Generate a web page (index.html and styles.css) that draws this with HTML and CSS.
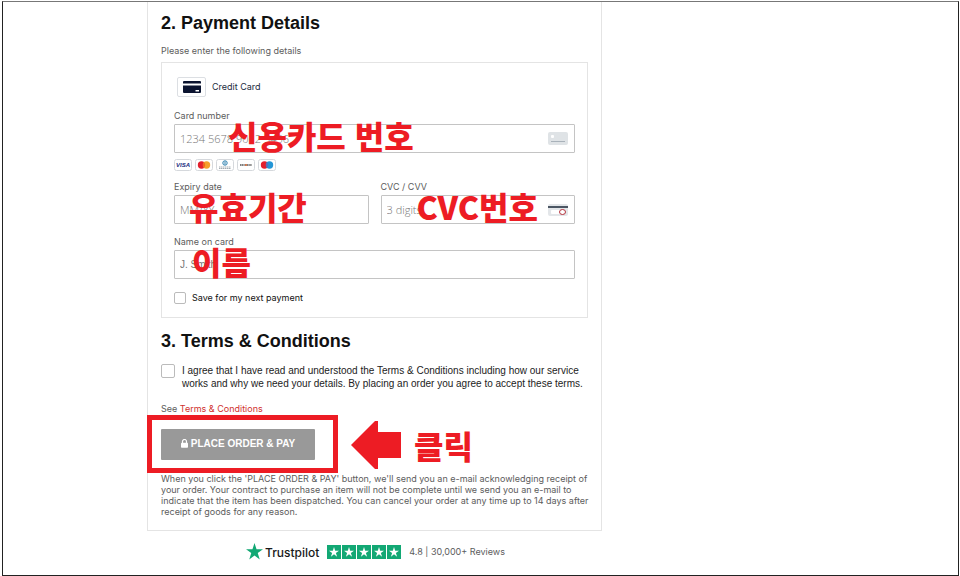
FILE: index.html
```
<!DOCTYPE html>
<html lang="en">
<head>
    <meta charset="UTF-8">
    <meta name="viewport" content="width=device-width, initial-scale=1.0">
    <title>Payment Details</title>
    <link rel="stylesheet" href="styles.css">
</head>
<body>
    <svg class="defs" aria-hidden="true">
        <symbol id="star" viewBox="0 0 20 20">
            <path d="M10 0l2.4 7.3H20l-6.2 4.6 2.4 7.4L10 14.700l-6.200 4.600 2.400-7.400L0 7.300h7.600z"/>
        </symbol>
    </svg>

    <main class="frame">
        <form class="checkout">
            <section>
                <h2>2. Payment Details</h2>
                <p class="intro">Please enter the following details</p>

                <div class="panel">
                    <div class="method">
                        <span class="method-icon">
                            <svg width="18" height="12" viewBox="0 0 18 12">
                                <path fill="#0b1430" d="M1 0h16q1 0 1 1v1.500H0V1q0-1 1-1zM0 4.500h18V11q0 1-1 1H1q-1 0-1-1z"/>
                                <path fill="#fff" d="M12.500 9h3.500v1.500h-3.500z"/>
                            </svg>
                        </span>
                        <span>Credit Card</span>
                    </div>

                    <div class="field">
                        <label for="cardNumber">Card number</label>
                        <div class="control">
                            <input type="text" id="cardNumber" placeholder="1234 5678 9012 3456">
                            <svg class="field-icon" width="20" height="14" viewBox="0 0 20 14">
                                <rect width="20" height="13" rx="2" fill="#dfe3e6"/>
                                <rect x="3" y="3" width="3" height="3" rx="1" fill="#fff"/>
                                <path d="M3 9.500h14" stroke="#a9b2ba"/>
                            </svg>
                            <span class="note note-number" lang="ko">신용카드 번호</span>
                        </div>
                        <div class="brands">
                            <svg width="18" height="12" viewBox="0 0 18 12">
                                <rect x=".5" y=".5" width="17" height="11" rx="2" fill="#fff" stroke="#d5d8dc"/>
                                <text x="9" y="8" class="visa">VISA</text>
                            </svg>
                            <svg width="18" height="12" viewBox="0 0 18 12">
                                <rect x=".5" y=".5" width="17" height="11" rx="2" fill="#fff" stroke="#d5d8dc"/>
                                <circle cx="6.500" cy="6" r="3.700" fill="#e3202c"/>
                                <circle cx="11.500" cy="6" r="3.700" fill="#f5a02a"/>
                                <path d="M9 3.300a3.700 3.700 0 0 1 0 5.400a3.700 3.700 0 0 1 0-5.400z" fill="#f26522"/>
                            </svg>
                            <svg width="18" height="12" viewBox="0 0 18 12">
                                <rect x=".5" y=".5" width="17" height="11" rx="2" fill="#fff" stroke="#d5d8dc"/>
                                <circle cx="9" cy="4" r="2.200" fill="#fff" stroke="#2b7fae"/>
                                <path d="M9 2.500v3" stroke="#2b7fae"/>
                                <path d="M3 8h12M3 9.500h12" stroke="#8d979e" stroke-width=".8" stroke-dasharray="1.500 .5"/>
                            </svg>
                            <svg width="18" height="12" viewBox="0 0 18 12">
                                <rect x=".5" y=".5" width="17" height="11" rx="2" fill="#fff" stroke="#d5d8dc"/>
                                <path d="M3 6h12" stroke="#555" stroke-width="1.500" stroke-dasharray="1.300 .4"/>
                                <circle cx="9" cy="6" r="1" fill="#e0703a"/>
                            </svg>
                            <svg width="18" height="12" viewBox="0 0 18 12">
                                <rect x=".5" y=".5" width="17" height="11" rx="2" fill="#fff" stroke="#d5d8dc"/>
                                <circle cx="6.500" cy="6" r="3.700" fill="#e3202c"/>
                                <circle cx="11.500" cy="6" r="3.700" fill="#2496d6"/>
                                <path d="M9 3.300a3.700 3.700 0 0 1 0 5.400a3.700 3.700 0 0 1 0-5.400z" fill="#5f6db5"/>
                            </svg>
                        </div>
                    </div>

                    <div class="field-row">
                        <div class="field">
                            <label for="expiry">Expiry date</label>
                            <div class="control">
                                <input type="text" id="expiry" placeholder="MM/YY">
                                <span class="note note-expiry" lang="ko">유효기간</span>
                            </div>
                        </div>
                        <div class="field">
                            <label for="cvc">CVC / CVV</label>
                            <div class="control">
                                <input type="text" id="cvc" placeholder="3 digits">
                                <svg class="field-icon" width="20" height="14" viewBox="0 0 20 14">
                                    <rect y="1" width="20" height="12" rx="2" fill="#e3e6e9"/>
                                    <path d="M0 4h20" stroke="#4b5663" stroke-width="2"/>
                                    <rect x="3" y="7" width="10" height="4" rx="1" fill="#fff"/>
                                    <ellipse cx="14.500" cy="9" rx="3" ry="2.500" fill="#fff" stroke="#b5303a"/>
                                </svg>
                                <span class="note note-cvc" lang="ko">CVC번호</span>
                            </div>
                        </div>
                    </div>

                    <div class="field">
                        <label for="cardName">Name on card</label>
                        <div class="control">
                            <input type="text" id="cardName" class="plain" placeholder="J. Smith">
                            <span class="note note-name" lang="ko">이름</span>
                        </div>
                    </div>

                    <div class="save">
                        <input type="checkbox" id="save">
                        <label for="save">Save for my next payment</label>
                    </div>
                </div>
            </section>

            <section>
                <h2>3. Terms &amp; Conditions</h2>
                <div class="agree">
                    <input type="checkbox" id="agree">
                    <label for="agree">I agree that I have read and understood the Terms &amp; Conditions including how our service<br>works and why we need your details. By placing an order you agree to accept these terms.</label>
                </div>
                <p class="see">See <a href="#terms">Terms &amp; Conditions</a></p>

                <div class="submit">
                    <button type="submit">
                        <svg width="7" height="9" viewBox="0 0 7 9">
                            <path d="M1.500 4V2.500a2 2 0 0 1 4 0V4" fill="none" stroke="#fff" stroke-width="1.200"/>
                            <rect y="3.700" width="7" height="5" rx=".8" fill="#fff"/>
                        </svg>
                        PLACE ORDER &amp; PAY
                    </button>
                    <div class="highlight"></div>
                    <div class="pointer">
                        <svg width="50" height="48" viewBox="0 0 50 48">
                            <path fill="#ed1c24" d="M0 24L24 0h3v11h23v26H27v11h-3z"/>
                        </svg>
                        <span class="note-text" lang="ko">클릭</span>
                    </div>
                </div>

                <p class="small-print">When you click the 'PLACE ORDER &amp; PAY' button, we'll send you an e-mail acknowledging receipt of<br>your order. Your contract to purchase an item will not be complete until we send you an e-mail to<br>indicate that the item has been dispatched. You can cancel your order at any time up to 14 days after<br>receipt of goods for any reason.</p>
            </section>
        </form>

        <footer class="trust">
            <svg class="logo-star" width="17" height="17"><use href="#star"/></svg>
            <span class="trust-name">Trustpilot</span>
            <span class="rating">
                <span><svg width="10" height="10"><use href="#star"/></svg></span>
                <span><svg width="10" height="10"><use href="#star"/></svg></span>
                <span><svg width="10" height="10"><use href="#star"/></svg></span>
                <span><svg width="10" height="10"><use href="#star"/></svg></span>
                <span><svg width="10" height="10"><use href="#star"/></svg></span>
            </span>
            <span>4.8 | 30,000+ Reviews</span>
        </footer>
    </main>
</body>
</html>
```
FILE: styles.css
```
:root {
    --red: #ed1c24;
    --green: #12a874;
    --line: #e4e4e4;
    --text: #5c5c5c;
}

* {
    box-sizing: border-box;
}

body {
    margin: 0;
    padding: 1px 1px 0 2px;
    background: white;
    color: var(--text);
    font: 9px/12px Inter, Arial, sans-serif;
}

.defs {
    position: absolute;
    width: 0;
    height: 0;
}

.frame {
    min-height: calc(100vh - 1px);
    padding-left: 144px;
    border: 1px solid #222;
    border-top-color: #777;
}

.checkout {
    max-width: 455px;
    padding: 10px 13px 13px;
    border: 1px solid var(--line);
    border-top: 0;
}

h2 {
    margin: 0;
    color: #111;
    font: bold 18px/22px "Liberation Sans", Arial, sans-serif;
}

p {
    margin: 0;
}

.intro {
    margin: 11px 0 5px;
}

.panel {
    margin-bottom: 12px;
    padding: 14px 12px 13px;
    border: 1px solid var(--line);
}

.method {
    display: flex;
    align-items: center;
    gap: 6px;
    margin: 0 3px 13px;
    color: #222b40;
}

.method-icon {
    display: flex;
    align-items: center;
    justify-content: center;
    width: 29px;
    height: 20px;
    border: 1px solid #dcdfe3;
    border-radius: 2px;
}

.field label {
    display: block;
    margin-bottom: 2px;
}

.control {
    position: relative;
}

input[type="text"] {
    display: block;
    width: 100%;
    height: 29px;
    padding: 0 5px;
    border: 1px solid #c4c4c4;
    border-radius: 1px;
    background: white;
    color: #333;
    font: 300 11px "Open Sans", sans-serif;
}

input[type="text"].plain {
    font: 10px "Liberation Sans", Arial, sans-serif;
}

input::placeholder {
    color: #777;
    opacity: 1;
}

.field-icon {
    position: absolute;
    top: 8px;
    right: 7px;
}

.brands {
    display: flex;
    gap: 3px;
    margin: 6px 0 10px;
}

.visa {
    fill: #1a2a80;
    font: italic bold 6px "Liberation Sans", Arial, sans-serif;
    text-anchor: middle;
}

.field-row {
    display: grid;
    grid-template-columns: 1fr 1fr;
    gap: 12px;
    margin-bottom: 12px;
}

/* red callouts over the fields */
.note,
.note-text {
    color: var(--red);
    font: 900 32px/32px "Noto Sans CJK KR", sans-serif;
    white-space: nowrap;
}

.note {
    position: absolute;
    top: -5px;
    pointer-events: none;
}

.note-number {
    left: 54px;
}

.note-expiry {
    left: 15px;
}

.note-cvc {
    left: 36px;
}

.note-name {
    left: 18px;
}

input[type="checkbox"] {
    appearance: none;
    flex: none;
    width: 12px;
    height: 12px;
    margin: 0;
    border: 1px solid #bbb;
    border-radius: 2px;
    background: white;
}

.save {
    display: flex;
    align-items: center;
    gap: 6px;
    margin-top: 13px;
    color: #111;
}

.agree {
    display: flex;
    gap: 7px;
    margin: 12px 0 13px;
    color: #222;
    font: 10px/13px "Liberation Sans", Arial, sans-serif;
    white-space: nowrap;
}

.agree input[type="checkbox"] {
    width: 14px;
    height: 14px;
}

.see a {
    color: #d0312d;
    text-decoration: none;
}

.submit {
    position: relative;
    display: flex;
    align-items: center;
    margin: 14px 0 13px;
}

button {
    display: flex;
    align-items: center;
    justify-content: center;
    gap: 3px;
    width: 154px;
    height: 31px;
    padding: 0 0 3px;
    border: 0;
    border-radius: 1px;
    background: #999;
    color: white;
    font: bold 10px "Liberation Sans", Arial, sans-serif;
}

.highlight {
    position: absolute;
    top: -14px;
    left: -14px;
    width: 191px;
    height: 58px;
    border: 5px solid var(--red);
    pointer-events: none;
}

.pointer {
    position: absolute;
    top: -8px;
    left: 190px;
    display: flex;
    align-items: center;
    gap: 13px;
}

.small-print {
    line-height: 11px;
    white-space: nowrap;
}

.trust {
    display: flex;
    align-items: center;
    max-width: 455px;
    padding: 12px 0 12px 99px;
}

.logo-star {
    fill: var(--green);
}

.logo-star use,
.rating use {
    width: 100%;
    height: 100%;
}

.trust-name {
    margin: 2px 8px 0 2px;
    color: #191919;
    font: 500 12px/15px Inter, sans-serif;
}

.rating {
    display: flex;
    gap: 1px;
    margin-right: 8px;
}

.rating span {
    display: flex;
    align-items: center;
    justify-content: center;
    width: 14px;
    height: 14px;
    background: var(--green);
}

.rating svg {
    fill: white;
}
```
